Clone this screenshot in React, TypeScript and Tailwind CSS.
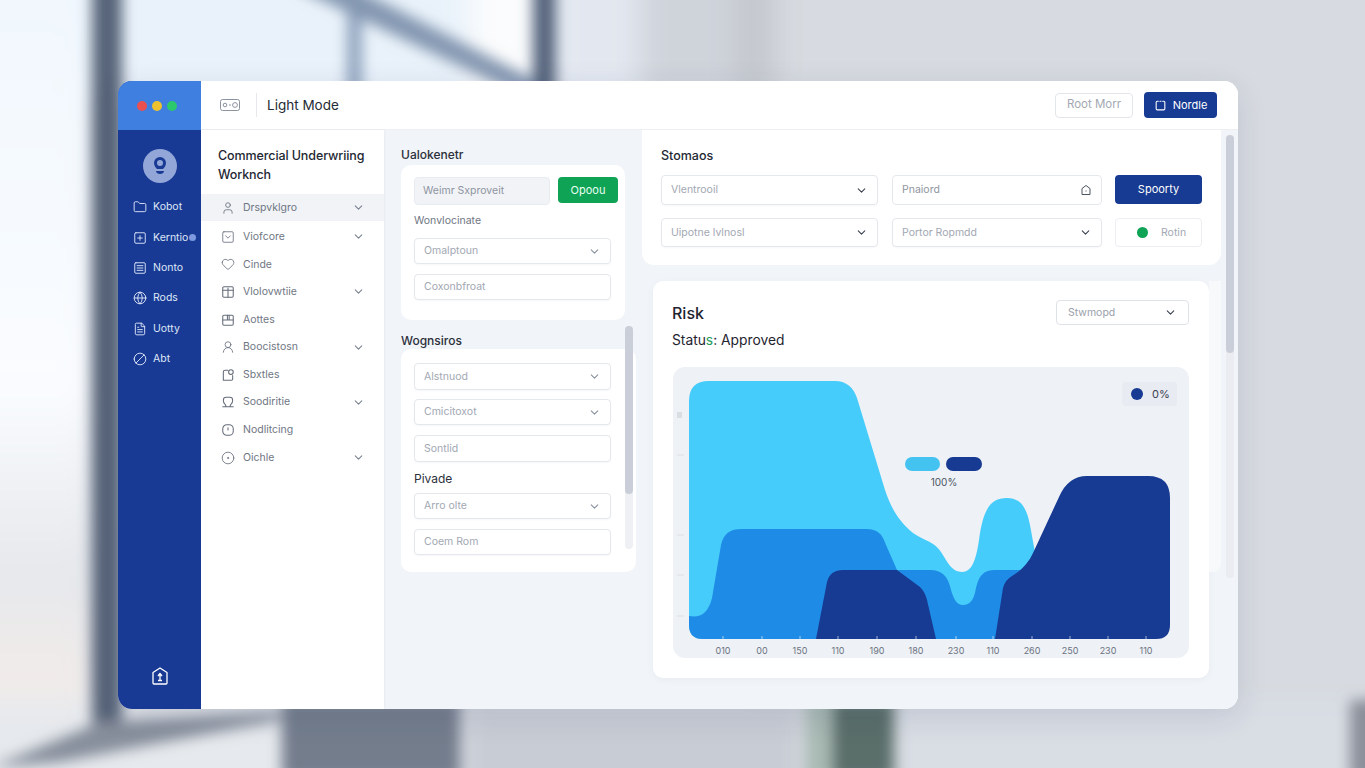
import type { ReactNode } from 'react'
import { Ban, ChevronDown, CircleDot, FileText, Folder, Globe, Heart, SquareChevronDown, SquareMenu, SquarePlus, User, UserRound } from 'lucide-react'

function Glyph({ children, className = 'w-[14px] h-[14px]' }: { children: ReactNode; className?: string }) {
  return (
    <svg viewBox="0 0 24 24" fill="none" stroke="currentColor" strokeWidth="1.8" strokeLinecap="round" strokeLinejoin="round" className={className}>
      {children}
    </svg>
  )
}

const rail = [
  { label: 'Kobot', icon: <Folder size={14} strokeWidth={1.6} /> },
  { label: 'Kerntio', icon: <SquarePlus size={14} strokeWidth={1.6} />, dot: true },
  { label: 'Nonto', icon: <SquareMenu size={14} strokeWidth={1.6} /> },
  { label: 'Rods', icon: <Globe size={14} strokeWidth={1.6} /> },
  { label: 'Uotty', icon: <FileText size={14} strokeWidth={1.6} /> },
  { label: 'Abt', icon: <Ban size={14} strokeWidth={1.6} className="-scale-x-100" /> },
]

const menu = [
  { label: 'Drspvklgro', icon: <User size={14} strokeWidth={1.4} />, more: true, active: true },
  { label: 'Viofcore', icon: <SquareChevronDown size={14} strokeWidth={1.4} />, more: true },
  { label: 'Cinde', icon: <Heart size={14} strokeWidth={1.4} /> },
  {
    label: 'Vlolovwtiie',
    more: true,
    icon: (
      <Glyph>
        <rect x="3" y="3" width="18" height="18" rx="2" />
        <path d="M3 9h18M12 5v16" />
      </Glyph>
    ),
  },
  {
    label: 'Aottes',
    icon: (
      <Glyph>
        <rect x="3" y="4" width="18" height="17" rx="2" />
        <path d="M3 12h18M11 4v8M14 4v8" />
      </Glyph>
    ),
  },
  { label: 'Boocistosn', icon: <UserRound size={14} strokeWidth={1.4} />, more: true },
  {
    label: 'Sbxtles',
    icon: (
      <Glyph>
        <path d="M12 4H7a3 3 0 0 0-3 3v14h14a2 2 0 0 0 2-2v-6" />
        <circle cx="17" cy="7" r="4" />
      </Glyph>
    ),
  },
  {
    label: 'Soodiritie',
    more: true,
    icon: (
      <Glyph>
        <path d="M7 16c-3-2-3-5-3-7a5 5 0 0 1 5-5h6a5 5 0 0 1 5 5c0 2 0 5-3 7M3 20h18M7 16l2 4M17 16l-2 4" />
      </Glyph>
    ),
  },
  {
    label: 'Nodlitcing',
    icon: (
      <Glyph>
        <rect x="3" y="3" width="18" height="18" rx="7" />
        <path d="M12 8v4" />
      </Glyph>
    ),
  },
  { label: 'Oichle', icon: <CircleDot size={14} strokeWidth={1.4} />, more: true },
]

function Field({ text, size = 'h-[26px] w-[197px]', arrow = false, dark = false }: { text: string; size?: string; arrow?: boolean; dark?: boolean }) {
  return (
    <div className={`${size} flex items-center justify-between rounded-[4px] border border-[#e4e7ec] bg-white pl-[9px] pr-[9px] shadow-[0_1px_2px_rgba(30,50,90,0.04)]`}>
      <span className="text-[10.5px] text-[#a2a8b3]">{text}</span>
      {arrow && <ChevronDown size={13} className={dark ? 'text-[#3b4250]' : 'text-[#8a919e]'} />}
    </div>
  )
}

const ticks = [
  ['010', 723],
  ['00', 762],
  ['150', 800],
  ['110', 838],
  ['190', 877],
  ['180', 916],
  ['230', 956],
  ['110', 993],
  ['260', 1032],
  ['250', 1070],
  ['230', 1108],
  ['110', 1146],
] as const

function RiskChart() {
  return (
    <svg viewBox="673 367 516 291" className="block w-[516px] h-[291px]">
      <path
        d="M689 401Q689 381 709 381H835Q851 381 857 398L885 490C890 505 897 520 913 533C925 541 935 542 941 552C948 563 952 572 962 572C972 572 976 560 979 540C983 510 990 498 1007 498C1022 498 1027 510 1030 525L1040 580V639H703Q689 639 689 625Z"
        fill="#45ccfa"
      />
      <path
        d="M689 616C700 618 708 614 712 598L721 545C724 533 730 529 742 529H866C878 529 882 534 886 545L897 570H930C942 570 948 576 951 590C954 600 957 605 963 605C970 605 974 600 976 588C979 575 984 570 995 570H1030V639H703Q689 639 689 625Z"
        fill="#1e8be6"
      />
      <path d="M816 639L827 582Q830 570 843 570H897L920 587Q925 592 927 600L936 639Z" fill="#173a92" />
      <path
        d="M995 639L1003 588Q1005 580 1012 576C1022 570 1029 562 1033 553L1059 497Q1068 476 1087 476H1148Q1170 476 1170 498V625Q1170 639 1156 639Z"
        fill="#173a92"
      />
      {ticks.map(([label, x], i) => (
        <g key={i}>
          <line x1={x} x2={x} y1="636" y2="639" stroke="#ffffff" strokeOpacity="0.6" />
          <text x={x} y="654" textAnchor="middle" className="text-[9px] fill-[#6b7280]">
            {label}
          </text>
        </g>
      ))}
      <rect x="677" y="412" width="5" height="6" fill="#d9dde4" />
      <path d="M677 455h7M677 535h7M677 575h7M677 616h7" stroke="#dde0e6" strokeWidth="1" />
      <rect x="905" y="457" width="35" height="14" rx="7" fill="#45c3f0" />
      <rect x="946" y="457" width="36" height="14" rx="7" fill="#173a92" />
      <text x="944" y="486" textAnchor="middle" className="text-[10px] fill-[#4b5563]">
        100%
      </text>
    </svg>
  )
}

export default function App() {
  return (
    <div className="relative w-full h-[768px] overflow-hidden bg-[#dfe3e9] font-['Inter',sans-serif]">
      {/* blurred office photo behind the window */}
      <svg viewBox="0 0 1365 768" className="absolute inset-0 w-full h-full" preserveAspectRatio="none">
        <defs>
          <filter id="soft" x="-10%" y="-10%" width="120%" height="120%">
            <feGaussianBlur stdDeviation="7" />
          </filter>
          <filter id="softer" x="-10%" y="-10%" width="120%" height="120%">
            <feGaussianBlur stdDeviation="14" />
          </filter>
          <linearGradient id="leftWall" x1="0" y1="0" x2="0" y2="1">
            <stop offset="0" stopColor="#f0f7fd" />
            <stop offset="0.5" stopColor="#fafcff" />
            <stop offset="0.72" stopColor="#e6e8ec" />
            <stop offset="0.85" stopColor="#f1ebe9" />
            <stop offset="1" stopColor="#f2f3f5" />
          </linearGradient>
        </defs>
        <g filter="url(#softer)">
          <rect x="-40" y="-40" width="135" height="850" fill="url(#leftWall)" />
          <rect x="90" y="-40" width="470" height="140" fill="#e9f2fa" />
          <rect x="470" y="-40" width="70" height="140" fill="#fbfcfd" />
          <rect x="555" y="-40" width="85" height="140" fill="#e3e8f0" />
          <rect x="640" y="-40" width="95" height="140" fill="#cfd3da" />
          <rect x="735" y="-40" width="40" height="140" fill="#c4c8ce" />
          <rect x="775" y="-40" width="640" height="850" fill="#d7dae0" />
          <rect x="-40" y="700" width="330" height="100" fill="#e6e9ed" />
          <rect x="462" y="700" width="340" height="100" fill="#c8ccd4" />
          <rect x="896" y="700" width="480" height="100" fill="#d9dde4" />
        </g>
        <g filter="url(#soft)">
          <rect x="92" y="-20" width="30" height="770" fill="#566378" />
          <rect x="347" y="-20" width="15" height="120" fill="#8ea3bd" />
          <path d="M280 -20L340 -20L535 80L530 100Z" fill="#8497b1" />
          <rect x="533" y="-20" width="23" height="120" fill="#55647c" />
          <path d="M-10 768L100 722L280 712L280 720L60 762Z" fill="#868e9b" />
          <rect x="282" y="700" width="178" height="80" fill="#737d8c" />
          <rect x="806" y="700" width="26" height="80" fill="#a9bab4" />
          <rect x="832" y="700" width="62" height="80" fill="#5a6e6a" />
          <rect x="1350" y="700" width="30" height="80" fill="#8a8f99" />
        </g>
      </svg>

      <div className="relative pt-[81px] pl-[118px]">
        <div className="flex w-[1120px] h-[628px] overflow-hidden rounded-[14px] bg-white shadow-[0_8px_30px_rgba(30,50,90,0.12)]">
          <aside className="w-[83px] shrink-0 flex flex-col items-stretch bg-[#183a94] text-white">
            <div className="h-[49px] flex items-center justify-center gap-[5px] pr-[6px] bg-[#3f7fe0]">
              <span className="w-[10px] h-[10px] rounded-full bg-[#ea5050]" />
              <span className="w-[10px] h-[10px] rounded-full bg-[#eec22e]" />
              <span className="w-[10px] h-[10px] rounded-full bg-[#2cc96c]" />
            </div>
            <div className="mt-[19px] mb-[9px] flex justify-center">
              <div className="w-[34px] h-[34px] rounded-full bg-[#93a6d8] flex items-center justify-center text-[#183a94]">
                <svg viewBox="0 0 24 24" className="w-[24px] h-[24px]" fill="currentColor">
                  <path d="M12 3a6 6 0 0 0-6 6c0 3 2 5 3 6h6c1-1 3-3 3-6a6 6 0 0 0-6-6Zm0 3a3 3 0 0 1 3 3c0 2-1 3-3 3s-3-1-3-3a3 3 0 0 1 3-3Z" />
                  <path d="M8 17h8c0 2-2 3-4 3s-4-1-4-3Z" />
                </svg>
              </div>
            </div>
            {rail.map((r) => (
              <div key={r.label} className="h-[30.4px] flex items-center gap-[6px] pl-[15px] text-[#dfe6f7]">
                {r.icon}
                <span className="text-[10.5px]">{r.label}</span>
                {r.dot && <span className="w-[7px] h-[7px] -ml-[5px] rounded-full bg-[#7d9ae0]" />}
              </div>
            ))}
            <div className="mt-auto mb-[23px] flex justify-center">
              <svg viewBox="0 0 20 20" className="w-[20px] h-[20px]" fill="none" stroke="currentColor" strokeWidth="1.3" strokeLinejoin="round">
                <path d="M3 6.5 10 2l7 4.5V17a1 1 0 0 1-1 1H4a1 1 0 0 1-1-1Z" />
                <path d="M10 14V8M8 10l2-2.5 2 2.5M8 14.5h4" />
              </svg>
            </div>
          </aside>

          <div className="flex-1 min-w-0 flex flex-col">
            <header className="h-[49px] shrink-0 flex items-center border-b border-[#eceef2] bg-white pl-[19px] pr-[21px]">
              <svg viewBox="0 0 20 14" className="w-[20px] h-[14px] text-[#8b93a1]" fill="none" stroke="currentColor" strokeWidth="1">
                <rect x="0.5" y="1.5" width="19" height="11" rx="2" />
                <circle cx="5" cy="7" r="1.8" />
                <circle cx="15" cy="7" r="2.4" />
                <path d="M9 7h2" />
              </svg>
              <span className="ml-[16px] w-px h-[24px] bg-[#e6e8ec]" />
              <span className="ml-[10px] text-[13.5px] text-[#262b36]">Light Mode</span>
              <button className="ml-auto w-[78px] h-[25px] rounded-[4px] border border-[#e2e5ea] bg-white text-[11.5px] text-[#a3a8b2]">Root Morr</button>
              <button className="ml-[11px] w-[73px] h-[26px] rounded-[4px] bg-[#173a92] flex items-center justify-center gap-[6px] text-[11px] text-white">
                <svg viewBox="0 0 24 24" className="w-[13px] h-[13px]" fill="none" stroke="currentColor" strokeWidth="2" strokeLinecap="round">
                  <path d="M8 4H6a2 2 0 0 0-2 2v12a2 2 0 0 0 2 2h12a2 2 0 0 0 2-2V6a2 2 0 0 0-2-2h-2M11 4h2" />
                </svg>
                Nordle
              </button>
            </header>

            <div className="flex-1 min-h-0 flex bg-[#f1f4f8]">
              <nav className="w-[183px] shrink-0 bg-white shadow-[1px_0_2px_rgba(30,50,90,0.04)]">
                <h2 className="pt-[16px] pl-[17px] mb-[10px] text-[12.5px] leading-[19px] font-medium tracking-[-0.1px] text-[#232833]">
                  Commercial Underwriing
                  <br />
                  Worknch
                </h2>
                {menu.map((m) => (
                  <div
                    key={m.label}
                    className={`flex items-center pl-[20px] pr-[19px] text-[#6f7683] ${m.active ? 'h-[27px] mb-[2px] bg-[#f1f3f7]' : 'h-[27.6px]'}`}
                  >
                    <span className="w-[14px] shrink-0 text-[#666d7a]">{m.icon}</span>
                    <span className="ml-[8px] text-[10.5px]">{m.label}</span>
                    {m.more && <ChevronDown size={13} className="ml-auto text-[#7b828f]" />}
                  </div>
                ))}
              </nav>

              <section className="relative w-[235px] shrink-0 ml-[17px] pt-[17px]">
                <h3 className="h-[16px] text-[12px] leading-[16px] font-medium text-[#2b303b]">Ualokenetr</h3>
                <div className="mt-[2px] w-[224px] h-[155px] rounded-[10px] bg-white pt-[12px] pl-[13px]">
                  <div className="flex items-start gap-[8px]">
                    <div className="w-[136px] h-[28px] flex items-center rounded-[4px] border border-[#e8ebf0] bg-[#f1f3f7] pl-[8px] text-[10.5px] text-[#8f95a1]">Weimr Sxproveit</div>
                    <button className="w-[60px] h-[26px] rounded-[4px] bg-[#0fa356] text-[11px] text-[#e8fff2]">Opoou</button>
                  </div>
                  <div className="mt-[8px] h-[16px] text-[10.5px] leading-[16px] text-[#6f7683]">Wonvlocinate</div>
                  <div className="mt-[9px]">
                    <Field text="Omalptoun" arrow />
                  </div>
                  <div className="mt-[10px]">
                    <Field text="Coxonbfroat" />
                  </div>
                </div>

                <h3 className="mt-[13px] h-[16px] text-[12px] leading-[16px] font-medium text-[#2b303b]">Wognsiros</h3>
                <div className="w-[235px] h-[223px] rounded-[10px] bg-white pt-[14px] pl-[13px]">
                  <Field text="Alstnuod" size="h-[27px] w-[197px]" arrow />
                  <div className="mt-[9px]">
                    <Field text="Cmicitoxot" arrow />
                  </div>
                  <div className="mt-[10px]">
                    <Field text="Sontlid" size="h-[27px] w-[197px]" />
                  </div>
                  <div className="mt-[9px] h-[16px] text-[12px] leading-[16px] text-[#2b303b]">Pivade</div>
                  <div className="mt-[6px]">
                    <Field text="Arro olte" arrow />
                  </div>
                  <div className="mt-[10px]">
                    <Field text="Coem Rom" />
                  </div>
                </div>

                {/* column scrollbar */}
                <div className="absolute left-[224px] top-[196px] w-[8px] h-[223px] rounded-full bg-[#eef0f4]">
                  <div className="w-full h-[168px] rounded-full bg-[#c9ced8]" />
                </div>
              </section>

              <section className="flex-1 min-w-0 flex ml-[6px]">
                <div className="w-[579px] shrink-0">
                  <div className="h-[135px] rounded-b-[12px] bg-white pt-[18px] pl-[19px]">
                    <h3 className="h-[16px] text-[12.5px] leading-[16px] font-medium text-[#232833]">Stomaos</h3>
                    <div className="mt-[11px] flex gap-[14px] h-[30px]">
                      <Field text="Vlentrooil" size="h-[30px] w-[217px]" arrow dark />
                      <div className="w-[210px] h-[30px] flex items-center justify-between rounded-[4px] border border-[#e4e7ec] bg-white px-[9px]">
                        <span className="text-[10.5px] text-[#8f95a1]">Pnaiord</span>
                        <svg viewBox="0 0 24 24" className="w-[12px] h-[12px] text-[#4b5563]" fill="none" stroke="currentColor" strokeWidth="2" strokeLinejoin="round">
                          <path d="M12 3l8 6v12H4V9Z" />
                          <path d="M12 13v2" />
                        </svg>
                      </div>
                      <button className="-ml-px w-[87px] h-[29px] rounded-[4px] bg-[#173a92] text-[11px] text-white">Spoorty</button>
                    </div>
                    <div className="mt-[13px] flex gap-[14px] h-[29px]">
                      <Field text="Uipotne lvlnosl" size="h-[29px] w-[217px]" arrow dark />
                      <Field text="Portor Ropmdd" size="h-[29px] w-[210px]" arrow dark />
                      <div className="-ml-px w-[87px] h-[29px] flex items-center gap-[13px] rounded-[4px] border border-[#eceef2] bg-white pl-[21px] text-[10.5px] text-[#a2a8b3]">
                        <span className="w-[11px] h-[11px] rounded-full bg-[#0fa356]" />
                        Rotin
                      </div>
                    </div>
                  </div>

                  <div className="mt-[16px] ml-[11px] flex items-start">
                    <div className="w-[556px] h-[397px] shrink-0 rounded-[10px] bg-white pt-[19px] pl-[19px] shadow-[0_2px_8px_rgba(30,50,90,0.04)]">
                      <div className="h-[25px] flex items-center justify-between pr-[20px]">
                        <span className="text-[16px] font-medium text-[#1f2430]">Risk</span>
                        <div className="w-[133px] h-[25px] flex items-center justify-between rounded-[4px] border border-[#dfe2e8] px-[11px]">
                          <span className="text-[10.5px] text-[#9aa0ac]">Stwmopd</span>
                          <ChevronDown size={13} className="text-[#3b4250]" />
                        </div>
                      </div>
                      <div className="mt-[5px] h-[20px] text-[13.8px] leading-[20px] text-[#1f2430]">
                        Statu<span className="text-[#1f9d5c]">s</span>: Approved
                      </div>
                      <div className="relative mt-[17px] ml-px w-[516px] h-[291px] rounded-[12px] bg-[#eef1f6]">
                        <RiskChart />
                        <div className="absolute top-[15px] right-[12px] w-[55px] h-[24px] flex items-center gap-[9px] rounded-[4px] bg-[#e8ebf1] pl-[9px]">
                          <span className="w-[12px] h-[12px] rounded-full bg-[#173a92]" />
                          <span className="text-[11px] text-[#3b4250]">0%</span>
                        </div>
                      </div>
                    </div>
                    <div className="w-[15px] h-[291px] rounded-br-[8px] bg-[#f8f9fb]" />
                  </div>
                </div>

                {/* page scrollbar */}
                <div className="ml-[5px] mt-[5px] w-[8px] h-[443px] rounded-full bg-[#eaecf1]">
                  <div className="w-full h-[218px] rounded-full bg-[#c9ced8]" />
                </div>
              </section>
            </div>
          </div>
        </div>
      </div>
    </div>
  )
}
